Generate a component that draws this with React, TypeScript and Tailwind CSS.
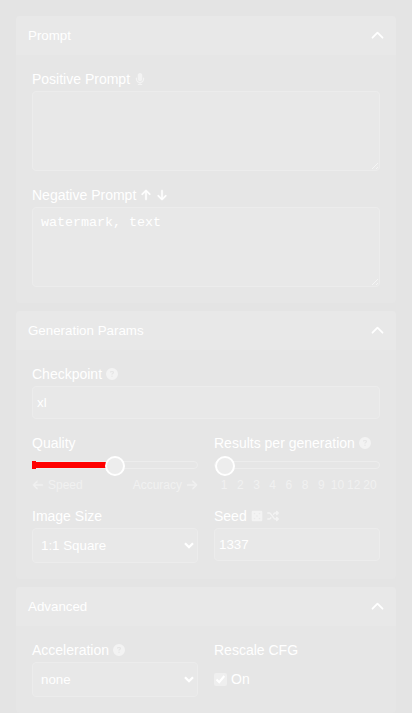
import type { ReactNode } from "react";
import {
  FaArrowDown,
  FaArrowLeft,
  FaArrowRight,
  FaArrowUp,
  FaCircleQuestion,
  FaMicrophone,
  FaShuffle,
} from "react-icons/fa6";

const field = "block w-full rounded border border-[#ececec] bg-[#e8e8e8] text-white";

function Panel({ title, children }: { title: string; children: ReactNode }) {
  return (
    <section className="overflow-hidden rounded bg-[#e6e6e6]">
      <header className="flex h-[39px] items-center justify-between bg-[#e8e8e8] px-3 text-[13.333px]">
        <span>{title}</span>
        <svg width="13" height="13" viewBox="0 0 13 13" fill="none" stroke="white" strokeWidth="1.8" strokeLinecap="round" strokeLinejoin="round">
          <path d="M1.500 8.700L6.500 3.700L11.500 8.700" />
        </svg>
      </header>
      <div className="flex flex-col gap-4 p-4">{children}</div>
    </section>
  );
}

function Label({ text, children }: { text: string; children?: ReactNode }) {
  return (
    <div className="mb-1 flex h-4 items-center gap-1 text-sm leading-4 whitespace-nowrap">
      <span>{text}</span>
      {children}
    </div>
  );
}

function Help() {
  return <FaCircleQuestion size={12} className="text-[#f3f3f3]" />;
}

function Dice() {
  return (
    <svg width="12" height="12" viewBox="0 0 12 12">
      <rect x="0.700" y="0.700" width="10.600" height="10.600" rx="1.300" fill="#f3f3f3" />
      <g fill="#eaeaea">
        <circle cx="3.500" cy="3.500" r="0.850" />
        <circle cx="8.500" cy="3.500" r="0.850" />
        <circle cx="6" cy="6" r="0.850" />
        <circle cx="3.500" cy="8.500" r="0.850" />
        <circle cx="8.500" cy="8.500" r="0.850" />
      </g>
    </svg>
  );
}

function Area({ value }: { value: string }) {
  return (
    <div className="relative">
      <textarea
        defaultValue={value}
        spellCheck={false}
        className={`${field} h-20 resize-none px-2 py-[7px] font-['Liberation_Mono',monospace] text-[13.333px] leading-[15px] outline-none`}
      />
      <svg className="absolute right-[2px] bottom-[2px]" width="6" height="6" stroke="#f8f8f8" strokeWidth="0.8">
        <path d="M0 6L6 0M4 6L6 4" />
      </svg>
    </div>
  );
}

function Select({ value }: { value: string }) {
  return (
    <div className={`${field} flex h-[35px] items-center justify-between pr-[3px] pl-2 text-[13.333px]`}>
      <span>{value}</span>
      <svg width="10" height="7" viewBox="0 0 10 7" fill="none" stroke="white" strokeWidth="2.3">
        <path d="M1 1.200L5 5.200L9 1.200" />
      </svg>
    </div>
  );
}

function Thumb({ className }: { className: string }) {
  return <div className={`absolute -top-1.5 h-5 w-5 rounded-full border-2 border-white bg-[#ededed] ${className}`} />;
}

export default function App() {
  return (
    <main className="flex h-[713px] flex-col gap-2 overflow-hidden bg-[#e4e4e4] p-4 font-['Liberation_Sans',Arial,sans-serif] text-white *:shrink-0">
      <Panel title="Prompt">
        <div>
          <Label text="Positive Prompt">
            <FaMicrophone size={12} className="text-[#f3f3f3]" />
          </Label>
          <Area value="" />
        </div>
        <div>
          <Label text="Negative Prompt">
            <FaArrowUp size={12} strokeWidth={14} />
            <FaArrowDown size={12} strokeWidth={14} />
          </Label>
          <Area value="watermark, text" />
        </div>
      </Panel>

      <Panel title="Generation Params">
        <div>
          <Label text="Checkpoint">
            <Help />
          </Label>
          <input defaultValue="xl" className={`${field} h-[33px] px-1 text-[13.333px]`} />
        </div>
        <div className="grid grid-cols-2 gap-4">
          <div>
            <Label text="Quality" />
            <div className="relative mt-[10px] h-2 rounded-full border border-[#ededed]">
              <div className="absolute -top-px -left-px h-2 w-1 bg-[#ff0000]" />
              <div className="absolute top-0 -left-px h-1.5 w-[76px] bg-[#ff0000]" />
              <Thumb className="left-[72px]" />
            </div>
            <div className="mt-2 flex h-[15px] items-center justify-between text-xs text-[#f1f1f1]">
              <span className="flex items-center gap-1">
                <FaArrowLeft size={12} strokeWidth={14} />
                Speed
              </span>
              <span className="flex items-center gap-1">
                Accuracy
                <FaArrowRight size={12} strokeWidth={14} />
              </span>
            </div>
          </div>
          <div>
            <Label text="Results per generation">
              <Help />
            </Label>
            <div className="relative mt-[10px] h-2 rounded-full border border-[#ededed]">
              <Thumb className="left-0" />
            </div>
            <div className="mt-2 grid h-[15px] grid-cols-10 items-center px-[2px] text-center text-xs text-[#f1f1f1]">
              {[1, 2, 3, 4, 6, 8, 9, 10, 12, 20].map((n) => (
                <span key={n}>{n}</span>
              ))}
            </div>
          </div>
          <div>
            <Label text="Image Size" />
            <Select value="1:1 Square" />
          </div>
          <div>
            <Label text="Seed">
              <Dice />
              <FaShuffle size={12} className="text-[#f3f3f3]" />
            </Label>
            <input defaultValue="1337" className={`${field} h-[33px] px-1 text-[13.333px]`} />
          </div>
        </div>
      </Panel>

      <Panel title="Advanced">
        <div className="grid grid-cols-2 gap-4">
          <div>
            <Label text="Acceleration">
              <Help />
            </Label>
            <Select value="none" />
          </div>
          <div>
            <Label text="Rescale CFG" />
            <div className="mt-[11px] flex h-[19px] items-center gap-1 text-sm leading-4">
              <span className="mt-[2px] flex h-[13px] w-[13px] items-center justify-center rounded-[2px] bg-[#efefef]">
                <svg width="11" height="11" viewBox="0 0 11 11" fill="none" stroke="white" strokeWidth="2">
                  <path d="M1.500 5.500L4.200 8.200L9.300 2" />
                </svg>
              </span>
              On
            </div>
          </div>
        </div>
      </Panel>
    </main>
  );
}
